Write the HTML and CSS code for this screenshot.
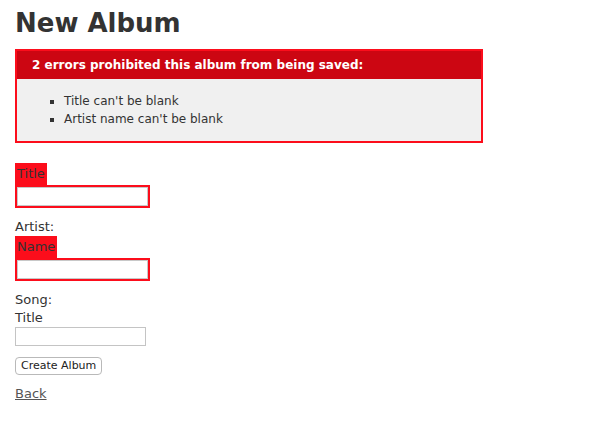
FILE: index.html
```html
<!DOCTYPE html>
<html>
<head>
<meta charset="utf-8">
<title>New Album</title>
<link rel="stylesheet" href="styles.css">
</head>
<body>
<h1 class="page-title">New Album</h1>
<form class="album-form">
  <div class="error-explanation">
    <h2 class="error-title">2 errors prohibited this album from being saved:</h2>
    <ul class="error-list">
      <li>Title can't be blank</li>
      <li>Artist name can't be blank</li>
    </ul>
  </div>

  <div class="field">
    <div class="field-with-errors"><label class="field-label">Title</label></div>
    <div class="field-with-errors"><input class="text-input" type="text"></div>
  </div>

  <div class="field">
    <div class="group-label">Artist:</div>
    <div class="field-with-errors"><label class="field-label">Name</label></div>
    <div class="field-with-errors"><input class="text-input" type="text"></div>
  </div>

  <div class="field">
    <div class="group-label">Song:</div>
    <label class="field-label plain">Title</label>
    <input class="text-input" type="text">
  </div>

  <div class="actions">
    <button class="submit-btn" type="button">Create Album</button>
  </div>
</form>
<a class="back-link" href="#">Back</a>
</body>
</html>
```

FILE: styles.css
```css
html, body {
  margin: 0;
  padding: 0;
}
body {
  background: #fff;
  color: #333;
  font-family: Verdana, "DejaVu Sans", sans-serif;
  font-size: 13px;
  line-height: 18px;
  padding: 14px 15px;
}
.page-title {
  font-size: 26px;
  line-height: 18px;
  font-weight: bold;
  margin: 0 0 17px 0;
}
.album-form {
  margin: 0;
}
.error-explanation {
  width: 450px;
  border: 2px solid #fc0d1b;
  padding: 7px 7px 0;
  margin-bottom: 20px;
  background: #f0f0f0;
}
.error-title {
  text-align: left;
  font-weight: bold;
  padding: 5px 5px 5px 15px;
  font-size: 12px;
  line-height: 18px;
  margin: -7px -7px 0;
  background: #cc0612;
  color: #fff;
}
.error-list {
  margin: 13px 0;
  padding-left: 40px;
}
.error-list li {
  font-size: 12px;
  list-style: square;
}
.field {
  margin-bottom: 10px;
}
.field-with-errors {
  padding: 2px;
  background: #fc0d1b;
  display: table;
}
.field-label {
  display: block;
}
.group-label {
  display: block;
}
.text-input {
  display: block;
  box-sizing: border-box;
  width: 131px;
  height: 19px;
  margin: 0;
  padding: 1px 3px;
  border: 1px solid #c4c4c4;
  background: #fff;
  font-family: "DejaVu Sans", sans-serif;
  font-size: 12px;
}
.field-with-errors .text-input {
  border-color: #c8c8c8;
}
.actions {
  margin-top: 11px;
  margin-bottom: 10px;
}
.submit-btn {
  display: block;
  box-sizing: border-box;
  height: 18px;
  padding: 0 5px;
  border: 1px solid #b9b9b9;
  border-radius: 4px;
  background: #fff;
  color: #222;
  font-family: "DejaVu Sans", sans-serif;
  font-size: 11px;
  line-height: 16px;
}
.back-link {
  color: #555;
  text-decoration: underline;
}
```
